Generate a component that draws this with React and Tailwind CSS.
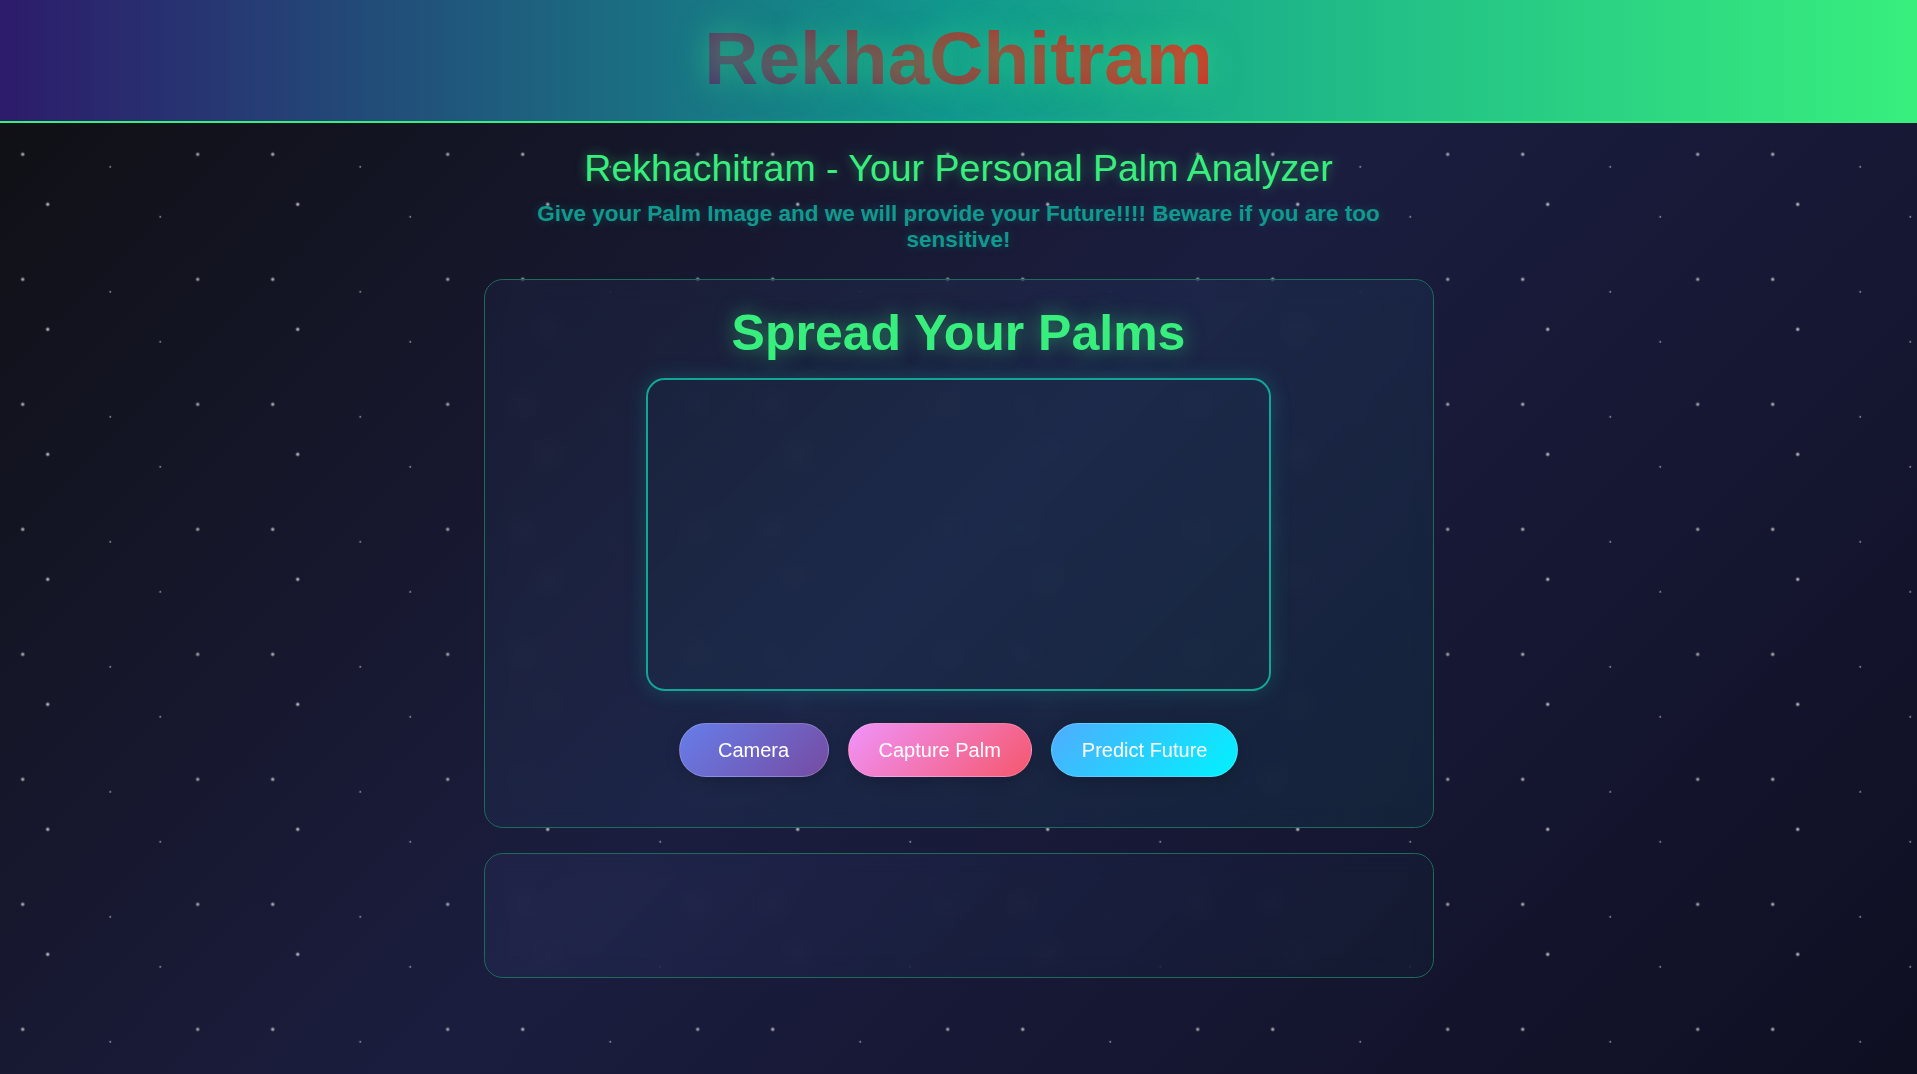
import React from 'react';

const Stars = () => (
  <div className="pointer-events-none absolute inset-0 bg-[radial-gradient(2.5px_2.5px_at_25px_37.5px,#eee,transparent),radial-gradient(2.5px_2.5px_at_50px_87.5px,#fff,transparent),radial-gradient(1.25px_1.25px_at_112.5px_50px,#fff,transparent),radial-gradient(1.25px_1.25px_at_162.5px_100px,#fff,transparent),radial-gradient(2.5px_2.5px_at_200px_37.5px,#ddd,transparent)] bg-[length:250px_125px] bg-[position:-2.3px_-8.2px] opacity-90" />
);

const buttons = [
  { label: 'Camera', cls: 'bg-[linear-gradient(135deg,#667eea_0%,#764ba2_100%)]' },
  { label: 'Capture Palm', cls: 'bg-[linear-gradient(135deg,#f093fb_0%,#f5576c_100%)]' },
  { label: 'Predict Future', cls: 'bg-[linear-gradient(135deg,#4facfe_0%,#00f2fe_100%)]' },
];

export default function App() {
  return (
    <div className="relative min-h-screen overflow-hidden bg-[linear-gradient(135deg,#0f0f12_0%,#1b1d3f_50%,#0f0f22_100%)] font-['Liberation_Sans',Arial,sans-serif]">
      <Stars />

      {/* Header */}
      <header className="relative z-10 flex h-[122.5px] items-center justify-center border-b-[2.5px] border-[#38ef7d] bg-[linear-gradient(90deg,#2d1b6b_0%,#11998e_50%,#38ef7d_100%)] pb-[4.5px]">
        <h1 className="bg-[linear-gradient(45deg,#453070_0%,#9a3838_50%,#e8261c_100%)] bg-clip-text text-[75px] font-bold leading-none text-transparent [text-shadow:0_0_30px_rgba(56,239,125,0.5)]">
          RekhaChitram
        </h1>
      </header>

      <main className="relative z-10 flex flex-col items-center pb-[96px]">
        <h2 className="mt-[24px] text-[37.5px] leading-[43px] text-[#38ef7d] [text-shadow:0_0_12px_rgba(56,239,125,0.45)]">
          Rekhachitram - Your Personal Palm Analyzer
        </h2>
        <p className="mt-[11.5px] max-w-[875px] text-center text-[22.5px] font-bold leading-[26px] text-[#11998e] [text-shadow:0_0_10px_rgba(17,153,142,0.35)]">
          Give your Palm Image and we will provide your Future!!!! Beware if you are too sensitive!
        </p>

        {/* Capture card */}
        <section className="mt-[26.3px] flex w-[950px] flex-col items-center rounded-[18.75px] border-[1.25px] border-[#1e6b5c] bg-[linear-gradient(135deg,rgba(102,126,234,0.06)_0%,rgba(17,153,142,0.1)_100%)] pt-[25px] pb-[49.4px] backdrop-blur-[10px]">
          <h3 className="text-[50px] font-bold leading-[57.5px] text-[#38ef7d] [text-shadow:0_0_20px_rgba(56,239,125,0.5)]">
            Spread Your Palms
          </h3>
          <div className="mt-[15.5px] h-[312.5px] w-[625px] rounded-[18.75px] border-[2.5px] border-[#13a596] bg-[rgba(17,153,142,0.03)] shadow-[0_0_20px_rgba(17,153,142,0.3)]" />
          <div className="mt-[32.5px] flex gap-[19px]">
            {buttons.map((b) => (
              <button
                key={b.label}
                type="button"
                className={`min-w-[150px] rounded-full border-[1.25px] border-white/20 px-[30px] py-[14.5px] text-[20px] leading-[23px] text-white shadow-[0_4px_15px_rgba(0,0,0,0.2)] ${b.cls}`}
              >
                {b.label}
              </button>
            ))}
          </div>
        </section>

        {/* Result card */}
        <section className="mt-[25.7px] h-[124.3px] w-[950px] rounded-[18.75px] border-[1.25px] border-[#1e6b5c] bg-[linear-gradient(135deg,rgba(102,126,234,0.07)_0%,rgba(17,153,142,0.04)_100%)] backdrop-blur-[10px]" />
      </main>
    </div>
  );
}
